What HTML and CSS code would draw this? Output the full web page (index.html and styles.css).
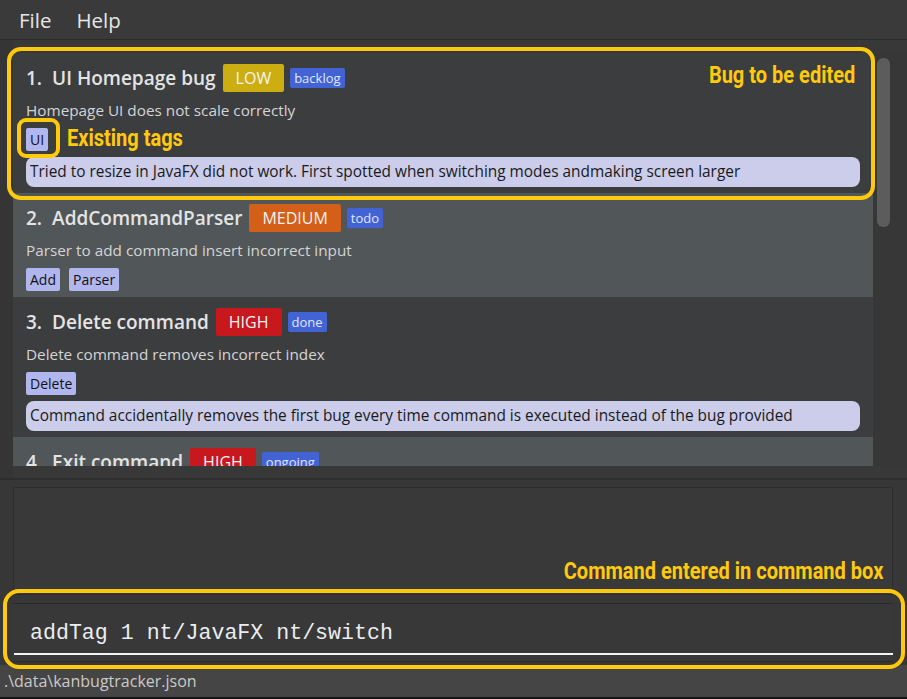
FILE: index.html
```html
<!DOCTYPE html>
<html>
<head>
<meta charset="utf-8">
<link rel="stylesheet" href="styles.css">
</head>
<body>
<div class="app">
  <header class="menubar"><span class="menu-item">File</span><span class="menu-item">Help</span></header>
  <section class="top-pane">
    <div class="list">
      <div class="cell odd">
        <div class="title-row"><span class="idx">1.</span><span class="name">UI Homepage bug</span><span class="prio low">LOW</span><span class="state">backlog</span></div>
        <div class="desc">Homepage UI does not scale correctly</div>
        <div class="tags"><span class="tag">UI</span></div>
        <div class="note">Tried to resize in JavaFX did not work. First spotted when switching modes andmaking screen larger</div>
      </div>
      <div class="cell even">
        <div class="title-row"><span class="idx">2.</span><span class="name">AddCommandParser</span><span class="prio medium">MEDIUM</span><span class="state">todo</span></div>
        <div class="desc">Parser to add command insert incorrect input</div>
        <div class="tags"><span class="tag">Add</span><span class="tag">Parser</span></div>
      </div>
      <div class="cell odd">
        <div class="title-row"><span class="idx">3.</span><span class="name">Delete command</span><span class="prio high">HIGH</span><span class="state">done</span></div>
        <div class="desc">Delete command removes incorrect index</div>
        <div class="tags"><span class="tag">Delete</span></div>
        <div class="note">Command accidentally removes the first bug every time command is executed instead of the bug provided</div>
      </div>
      <div class="cell even">
        <div class="title-row"><span class="idx">4.</span><span class="name">Exit command</span><span class="prio high">HIGH</span><span class="state">ongoing</span></div>
        <div class="desc">Exit command does not close the window</div>
      </div>
    </div>
    <div class="scrollbar"><div class="thumb"></div></div>
  </section>
  <section class="result-pane"><div class="result-box"></div></section>
  <section class="command-pane">
    <div class="command-box">
      <div class="command-text">addTag 1 nt/JavaFX nt/switch</div>
      <div class="command-line"></div>
    </div>
  </section>
  <footer class="statusbar">.\data\kanbugtracker.json</footer>
  <div class="bottom-strip"></div>

  <div class="callout callout-bug"></div>
  <div class="callout callout-tag"></div>
  <div class="callout callout-cmd"></div>
  <div class="callout-label label-bug">Bug to be edited</div>
  <div class="callout-label label-tag">Existing tags</div>
  <div class="callout-label label-cmd">Command entered in command box</div>
</div>
</body>
</html>
```

FILE: styles.css
```css
* { box-sizing: border-box; }
html, body { margin: 0; padding: 0; }
body {
  width: 907px;
  height: 699px;
  overflow: hidden;
  background: #373737;
  font-family: "Open Sans", "Noto Sans", sans-serif;
}
.app {
  position: relative;
  width: 907px;
  height: 699px;
}
.menubar {
  height: 40px;
  background: #3a3a3a;
  border-bottom: 1px solid #2b2b2b;
  display: flex;
  align-items: center;
  gap: 25px;
  padding-left: 19px;
  color: #e6e6e6;
  font-size: 20.5px;
}
.top-pane {
  height: 440px;
  padding: 13px 0 0 13px;
  display: flex;
  background: #383838;
  border-bottom: 2px solid #2e2e2e;
  box-shadow: inset 13px 0 0 #353535;
}
.list {
  width: 860px;
  height: 413px;
  overflow: hidden;
  display: flex;
  flex-direction: column;
}
.cell {
  flex: none;
  padding: 11px 13px 6px;
  display: flex;
  flex-direction: column;
  gap: 6px;
}
.cell.odd { background: #3c3d3f; }
.cell.even { background: #515658; }
.title-row {
  height: 28px;
  display: flex;
  align-items: center;
  gap: 6px;
}
.idx, .name {
  font-size: 19px;
  font-weight: 600;
  color: #e4e4e4;
}
.idx { margin-right: 4px; }
.name { margin-right: 1px; }
.prio {
  height: 28px;
  display: flex;
  align-items: center;
  padding: 0 13px;
  color: #f4f4f4;
  font-size: 16px;
  border-radius: 2px;
}
.prio.low { background: #cdae12; }
.prio.medium { background: #d35f18; }
.prio.high { background: #c6181d; }
.state {
  height: 20px;
  display: flex;
  align-items: center;
  padding: 0 4px;
  background: #4163d4;
  color: #e2e6ff;
  font-size: 13px;
  border-radius: 2px;
}
.desc {
  height: 24px;
  line-height: 24px;
  font-size: 15.3px;
  color: #d4d4d4;
}
.tags {
  height: 23px;
  display: flex;
  gap: 9px;
}
.tag {
  height: 23px;
  line-height: 23px;
  padding: 0 4px;
  background: #b2b6ee;
  color: #111111;
  font-size: 14px;
  border-radius: 2px;
}
.note {
  width: 834px;
  height: 30px;
  line-height: 30px;
  padding-left: 4px;
  background: #cbcdea;
  color: #1a1a1a;
  font-size: 15.4px;
  border-radius: 8px;
  white-space: nowrap;
}
.scrollbar {
  width: 34px;
  height: 413px;
  background: #373737;
  padding: 5px 0 0 4px;
}
.thumb {
  width: 13px;
  height: 169px;
  background: #5c5c5c;
  border-radius: 6px;
}
.result-pane {
  padding: 7px 14px 0 13px;
}
.result-box {
  height: 108px;
  background: #393939;
  border: 1px solid #2d2d2d;
}
.command-pane {
  padding: 8px 14px 0 13px;
  height: 70px;
}
.command-box {
  height: 59px;
  background: #383838;
  border-top: 1px solid #2b2b2b;
  border-bottom: 1px solid #2b2b2b;
  padding-top: 15px;
}
.command-text {
  height: 28px;
  line-height: 28px;
  padding-left: 17px;
  font-family: "Liberation Mono", monospace;
  font-size: 21.6px;
  color: #ebedf2;
  white-space: nowrap;
}
.command-line {
  margin-top: 6px;
  height: 2px;
  background: #f4f4f4;
  margin-left: 1px;
}
.statusbar {
  height: 32px;
  line-height: 32px;
  padding-left: 4px;
  background: #454545;
  color: #cacaca;
  font-size: 16px;
}
.bottom-strip {
  height: 2px;
  background: #151515;
}
.callout {
  position: absolute;
  border: 4px solid #ffc90e;
}
.callout-bug { left: 7px; top: 47px; width: 868px; height: 153px; border-radius: 14px; }
.callout-tag { left: 17px; top: 118px; width: 43px; height: 40px; border-radius: 9px; }
.callout-cmd { left: 3px; top: 589px; width: 902px; height: 80px; border-radius: 16px; }
.callout-label {
  position: absolute;
  font-family: Roboto, sans-serif;
  font-weight: 700;
  font-size: 23px;
  line-height: 1;
  color: #ffc90e;
  white-space: nowrap;
  transform: scaleX(0.87);
}
.label-bug { right: 52px; top: 64px; transform-origin: right top; }
.label-tag { left: 67px; top: 127px; transform-origin: left top; }
.label-cmd { right: 24px; top: 560px; transform-origin: right top; }
```
